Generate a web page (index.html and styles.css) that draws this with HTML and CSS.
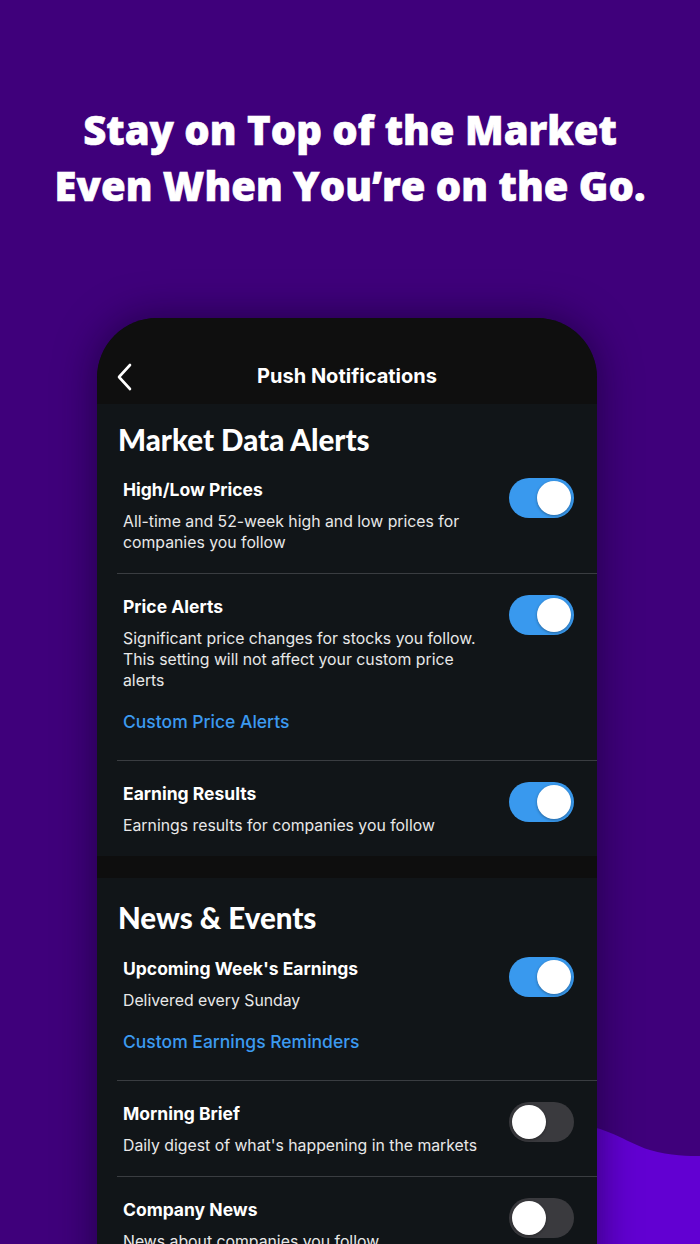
FILE: index.html
```html
<!DOCTYPE html>
<html>
<head>
<meta charset="utf-8">
<link rel="stylesheet" href="styles.css">
</head>
<body>
<svg class="wave" viewBox="0 0 700 1244" preserveAspectRatio="none" aria-hidden="true">
  <path d="M560 1126 C600 1120 620 1140 650 1150 C670 1156 690 1156 700 1156 L700 1244 L560 1244 Z" fill="#6200d2"/>
</svg>
<main class="page">
  <h1 class="headline">Stay on Top of the Market<br>Even When You’re on the Go.</h1>
  <section class="phone">
    <header class="bar">
      <svg class="back" width="16" height="28" viewBox="0 0 16 28"><path d="M13 2 L2 14 L13 26" fill="none" stroke="#fff" stroke-width="2.6" stroke-linecap="round" stroke-linejoin="round"/></svg>
      <div class="bar-title">Push Notifications</div>
      <span></span>
    </header>
    <div class="group">
      <h2 class="group-title">Market Data Alerts</h2>
      <div class="item">
        <div class="text">
          <div class="title">High/Low Prices</div>
          <div class="desc">All-time and 52-week high and low prices for companies you follow</div>
        </div>
        <div class="toggle on"><span class="knob"></span></div>
      </div>
      <div class="item">
        <div class="text">
          <div class="title">Price Alerts</div>
          <div class="desc">Significant price changes for stocks you follow. This setting will not affect your custom price alerts</div>
          <div class="link">Custom Price Alerts</div>
        </div>
        <div class="toggle on"><span class="knob"></span></div>
      </div>
      <div class="item last">
        <div class="text">
          <div class="title">Earning Results</div>
          <div class="desc">Earnings results for companies you follow</div>
        </div>
        <div class="toggle on"><span class="knob"></span></div>
      </div>
    </div>
    <div class="band"></div>
    <div class="group second">
      <h2 class="group-title">News &amp; Events</h2>
      <div class="item">
        <div class="text">
          <div class="title">Upcoming Week's Earnings</div>
          <div class="desc">Delivered every Sunday</div>
          <div class="link">Custom Earnings Reminders</div>
        </div>
        <div class="toggle on"><span class="knob"></span></div>
      </div>
      <div class="item">
        <div class="text">
          <div class="title">Morning Brief</div>
          <div class="desc">Daily digest of what's happening in the markets</div>
        </div>
        <div class="toggle"><span class="knob"></span></div>
      </div>
      <div class="item last">
        <div class="text">
          <div class="title">Company News</div>
          <div class="desc">News about companies you follow</div>
        </div>
        <div class="toggle"><span class="knob"></span></div>
      </div>
    </div>
  </section>
</main>
</body>
</html>
```

FILE: styles.css
```css
* { box-sizing: border-box; }
html, body {
  margin: 0;
  padding: 0;
  height: 1244px;
  overflow: hidden;
}
body {
  background: #3f007b;
  font-family: "Inter", "Noto Sans", sans-serif;
  color: #fff;
  position: relative;
}
.wave {
  position: absolute;
  left: 0;
  top: 0;
  width: 700px;
  height: 1244px;
}
.page {
  position: relative;
  padding-top: 102px;
}
.headline {
  margin: 0;
  text-align: center;
  font-family: "Open Sans", sans-serif;
  font-weight: 800;
  font-size: 40px;
  line-height: 56px;
  letter-spacing: 0;
  color: #fff;
  -webkit-text-stroke: 0.6px #fff;
}
.phone {
  width: 500px;
  min-height: 1000px;
  margin: 104px 0 0 97px;
  background: #111518;
  border-radius: 60px 60px 0 0;
  overflow: hidden;
  box-shadow: 0 0 40px rgba(10, 0, 30, 0.55);
}
.bar {
  height: 86px;
  background: #0f0f0f;
  display: grid;
  grid-template-columns: 1fr auto 1fr;
  align-items: end;
  padding: 0 20px 15px 20px;
}
.back { display: block; margin-bottom: -2px; }
.bar-title {
  font-weight: 700;
  font-size: 20px;
  line-height: 26px;
}
.group {
  padding: 18px 0 0 20px;
}
.group.second { padding-top: 22px; }
.group-title {
  margin: 0 0 3px 1px;
  font-family: "Lato", sans-serif;
  font-weight: 900;
  font-size: 29.5px;
  line-height: 36px;
}
.item {
  display: flex;
  justify-content: space-between;
  align-items: flex-start;
  padding: 22px 23px 20px 6px;
  border-bottom: 1.5px solid #3a3d41;
}
.group .item:first-of-type { padding-top: 18px; }
.group.second .item:first-of-type { padding-top: 19px; }
.item.last { border-bottom: none; }
.text { width: 362px; }
.title {
  font-weight: 700;
  font-size: 17.5px;
  line-height: 22px;
}
.desc {
  margin-top: 10px;
  font-size: 15.8px;
  line-height: 21px;
  color: #e8e8e8;
}
.link {
  margin-top: 20px;
  margin-bottom: 7px;
  font-weight: 500;
  font-size: 17.5px;
  line-height: 22px;
  color: #3c9af0;
}
.toggle {
  width: 65px;
  height: 40px;
  margin-top: -1px;
  border-radius: 20px;
  background: #3a3a3e;
  position: relative;
  flex: none;
}
.toggle.on { background: #3999ee; }
.knob {
  position: absolute;
  top: 3px;
  left: 3px;
  width: 34px;
  height: 34px;
  border-radius: 50%;
  background: #fff;
  box-shadow: 0 1px 3px rgba(0,0,0,0.35);
}
.toggle.on .knob { left: 28px; }
.band {
  height: 22px;
  background: #0e0e0e;
}
```
